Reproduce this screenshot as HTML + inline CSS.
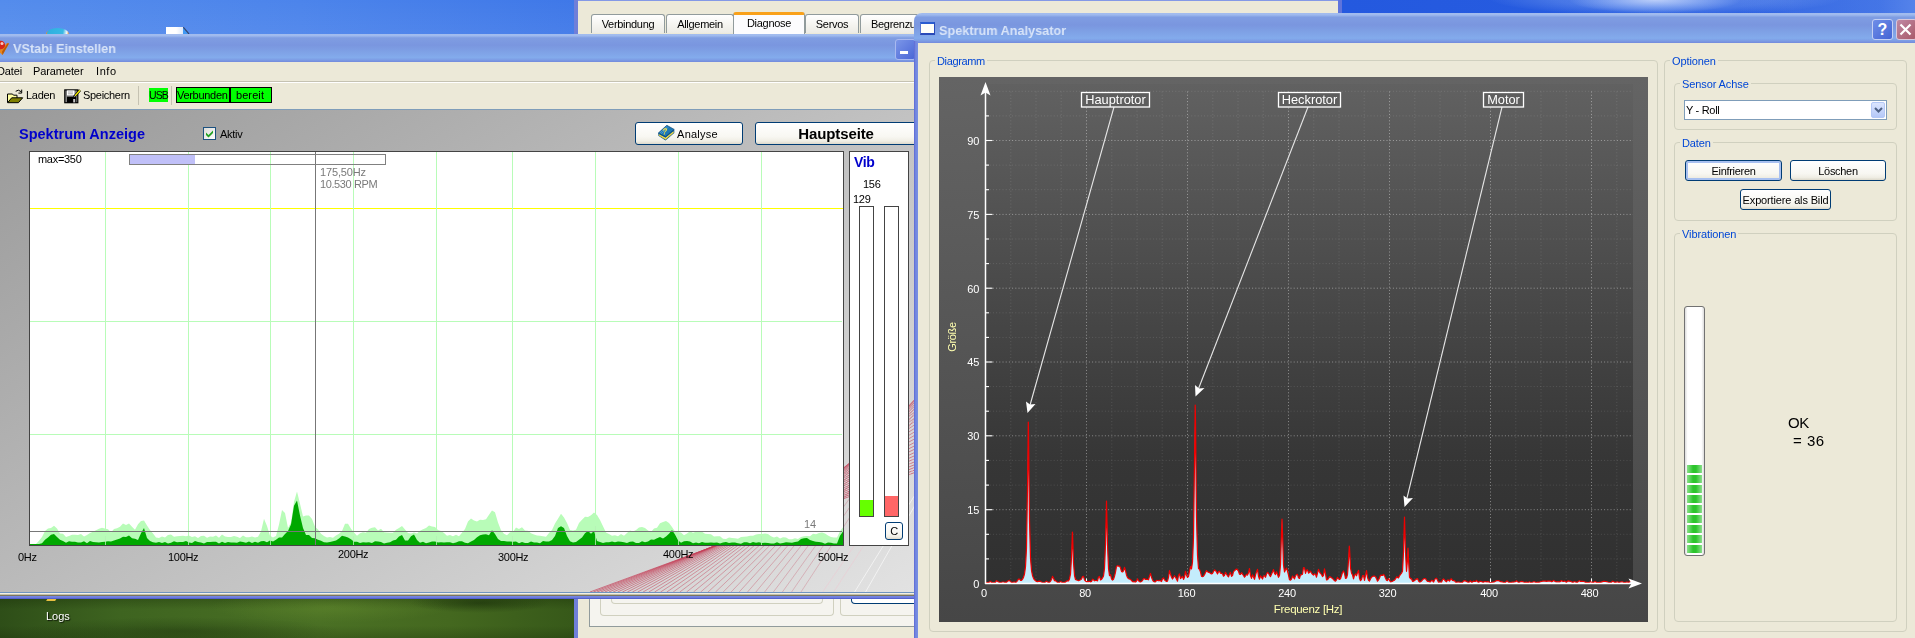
<!DOCTYPE html>
<html lang="de">
<head>
<meta charset="utf-8">
<title>VStabi Spektrum</title>
<style>
*{box-sizing:border-box;margin:0;padding:0}
html,body{width:1915px;height:638px;overflow:hidden;background:#3a6ee0}
.t,.btn,.tab,.gl,.ttl{will-change:transform}
body{position:relative;font-family:"Liberation Sans",sans-serif;font-size:11px;color:#000;letter-spacing:-.3px}
.a{position:absolute}
.t{position:absolute;white-space:nowrap;line-height:1}
/* desktop */
#sky{left:0;top:0;width:1915px;height:600px;background:linear-gradient(90deg,#548cec 0,#4c84eb 300px,#3f78e8 577px,#2a5fe2 1000px,#2459df 1340px,#2a5fe0 1915px)}
#sky2{left:0;top:0;width:577px;height:40px;background:linear-gradient(180deg,rgba(255,255,255,0) 0,rgba(255,255,255,.06) 100%)}
#cloud{left:1490px;top:-20px;width:350px;height:36px;border-radius:50%;background:radial-gradient(ellipse at center,rgba(190,212,255,.4) 0,rgba(170,200,250,.25) 45%,rgba(120,160,240,0) 72%)}
#cloud2{left:1570px;top:-13px;width:170px;height:26px;border-radius:50%;background:radial-gradient(ellipse at center,rgba(225,235,255,.7) 0,rgba(200,220,255,.35) 40%,rgba(150,180,245,0) 72%)}
#cloud3{left:1740px;top:0;width:175px;height:13px;background:linear-gradient(90deg,rgba(120,160,240,0) 0,rgba(120,160,240,.22) 30%,rgba(130,170,245,.3) 80%,rgba(150,185,250,.4) 100%)}
#grass{left:0;top:597px;width:580px;height:41px;background:radial-gradient(ellipse 70px 10px at 480px 6px,rgba(20,40,8,.5),rgba(20,40,8,0)),radial-gradient(ellipse 120px 16px at 330px 10px,rgba(110,150,50,.35),rgba(110,150,50,0)),radial-gradient(ellipse 160px 14px at 180px 34px,rgba(20,40,8,.35),rgba(20,40,8,0)),linear-gradient(180deg,rgba(20,40,5,.35) 0,rgba(20,40,5,0) 30%,rgba(20,40,5,0) 70%,rgba(20,40,5,.25) 100%),linear-gradient(90deg,#2e4e18 0,#3e6420 120px,#4a7024 320px,#44681f 450px,#365819 580px)}
/* back window */
#bw{left:574px;top:-30px;width:768px;height:680px;background:#ece9d8;border-left:4px solid #6f7fd9;border-right:4px solid #5f74dc}
.tab{position:absolute;top:44px;height:19px;border:1px solid #919b9c;border-bottom:none;border-radius:3px 3px 0 0;background:linear-gradient(180deg,#fff 0,#f4f3ee 60%,#ecebe5 100%);text-align:center;line-height:19px;font-size:11px}
.tab.sel{top:42px;height:22px;background:#fcfcfe;border-top:3px solid #f9a11a;line-height:17px}
/* XP windows */
.tb{position:absolute;left:0;top:0;right:0;background:linear-gradient(180deg,#a3bcee 0,#9fbaee 6%,#7f9de2 14%,#7a96df 40%,#7fa2e6 65%,#83abec 84%,#7c9ce4 93%,#7389dc 100%)}
.ttl{position:absolute;white-space:nowrap;font-weight:bold;font-size:13.5px;color:#d8e4f8;line-height:1;letter-spacing:0;transform-origin:0 50%;transform:scaleX(.94)}
.btn{position:absolute;border:1px solid #003c74;border-radius:3px;background:linear-gradient(180deg,#fff 0,#f8f7f2 65%,#f0eee5 86%,#ddd9cb 100%);text-align:center;white-space:nowrap}
.gb{position:absolute;border:1px solid #d0d0bf;border-radius:4px}
.gl{position:absolute;white-space:nowrap;line-height:1;color:#0046d5;background:#ece9d8;padding:0 2px;font-size:11px;letter-spacing:-.1px}
/* vstabi */
#vs{left:-6px;top:33px;width:921px;height:566px;background:#ece9d8;clip-path:inset(1px 0 0 0)}
#vgray{left:6px;top:77px;width:915px;height:482px;background:linear-gradient(147deg,#9a9a9a 0,#e2e2e2 100%)}
/* spektrum */
#sp{left:914px;top:13px;width:1010px;height:640px;background:#ece9d8;border-radius:8px 0 0 0;overflow:hidden}
#sp>*{margin-left:4px}
#sp>.tb{margin-left:0}
#spb{left:0;top:28px;width:4px;height:620px;background:linear-gradient(90deg,#5d68d2 0,#7286e0 40%,#7890e2 100%);margin-left:0!important}
svg text{font-family:"Liberation Sans",sans-serif}
.gM{stroke:rgba(255,255,255,.42);stroke-width:1;stroke-dasharray:1 2.2}
.gm{stroke:rgba(255,255,255,.13);stroke-width:1;stroke-dasharray:1 2.2}
.tk{stroke:#fff;stroke-width:1.1}
</style>
</head>
<body>
<!-- ================= desktop ================= -->
<div class="a" id="sky"></div><div class="a" id="sky2"></div>
<div class="a" id="cloud"></div><div class="a" id="cloud2"></div><div class="a" id="cloud3"></div>
<div class="a" id="grass"></div>
<div class="a" style="left:46px;top:28px;width:23px;height:12px;border-radius:50%;background:linear-gradient(100deg,#e8902a 0,#e8902a 6%,#2fb0e0 10%,#38b8e4 70%,#f4f8fc 86%,#e8a040 94%)"></div>
<div class="a" style="left:166px;top:27px;width:17px;height:7px;background:linear-gradient(90deg,#fff 0,#fff 60%,#dfe9fa 100%)"></div><svg class="a" style="left:183px;top:27px" width="7" height="7" viewBox="0 0 7 7"><path d="M0 0.500L5.500 7H0z" fill="#3f98f4"/><path d="M.3.300L6 7" stroke="#34466e" stroke-width="1.200"/></svg>
<div class="a" style="left:47px;top:598px;width:9px;height:3px;background:#e8c040;transform:skewX(-30deg)"></div>
<div class="t" style="left:46px;top:611px;font-size:11px;color:#fff;text-shadow:1px 1px 1px rgba(0,0,0,.8);letter-spacing:0">Logs</div>

<!-- ================= background window with tabs ================= -->
<div class="a" id="bw">
  <div class="a" style="left:0;top:30px;width:760px;height:1px;background:#8499e6"></div>
  <div class="tab" style="left:13px;width:74px">Verbindung</div>
  <div class="tab" style="left:88px;width:68px">Allgemein</div>
  <div class="tab" style="left:227px;width:54px">Servos</div>
  <div class="tab" style="left:282px;width:70px;text-align:left;padding-left:10px">Begrenzung</div>
  <div class="tab sel" style="left:155px;width:72px">Diagnose</div>
  <!-- bottom part -->
  <div class="a" style="left:11px;top:600px;width:760px;height:57px;background:#f5f4ef;border:1px solid #919b9c;border-top:none"></div>
  <div class="a" style="left:22px;top:600px;width:234px;height:46px;border:1px solid #d0d0bf;border-top:none;border-radius:0 0 4px 4px"></div>
  <div class="a" style="left:33px;top:600px;width:212px;height:34px;border:1px solid #d0d0bf;border-top:none;border-radius:0 0 4px 4px"></div>
  <div class="a" style="left:262px;top:600px;width:120px;height:46px;border:1px solid #d0d0bf;border-top:none;border-radius:0 0 0 4px"></div>
  <div class="a" style="left:273px;top:600px;width:100px;height:34px;border:1px solid #003c74;border-top:none;border-radius:0 0 0 4px;background:#fff"></div>
</div>

<!-- ================= VStabi Einstellen ================= -->
<div class="a" id="vs">
  <div class="tb" style="top:1px;height:28px"></div>
  <svg class="a" style="left:6px;top:5px" width="12" height="20" viewBox="0 0 12 20"><path d="M-2 9l3.500 2.500L7 5l2 .5L2.500 17-2 13z" fill="#e8861a"/><path d="M2.500 17L9 5.500 7.800 5.200 2 13.500z" fill="#b85a08"/><circle cx="0.800" cy="7" r="4.300" fill="#d82418"/><circle cx="2" cy="5.500" r="1.500" fill="#f8c8c0"/></svg>
  <div class="ttl" style="left:19px;top:9px">VStabi Einstellen</div>
  <div class="a" style="left:901px;top:6px;width:21px;height:21px;border:1px solid #a9b9f0;border-radius:3px;background:linear-gradient(135deg,#7b96e8 0,#4a66d6 100%)"><div class="a" style="left:4px;top:11px;width:8px;height:3px;background:#fff"></div></div>
  <!-- menu -->
  <div class="t" style="left:3px;top:33px;font-size:11px;letter-spacing:-.1px">Datei</div>
  <div class="t" style="left:39px;top:33px;font-size:11px;letter-spacing:-.1px">Parameter</div>
  <div class="t" style="left:102px;top:33px;font-size:11px;letter-spacing:.6px">Info</div>
  <div class="a" style="left:0;top:48px;width:921px;height:1px;background:#c5c2b2"></div>
  <div class="a" style="left:0;top:49px;width:921px;height:1px;background:#fff"></div>
  <!-- toolbar -->
  <svg class="a" style="left:12px;top:54px" width="18" height="17" viewBox="0 0 18 17"><path d="M1.500 15.500V7h5l1 1.200h3.500v3" fill="#ffffa0" stroke="#000" stroke-width="1"/><path d="M1.600 15.700h10.800l4.300-4.900H5.700z" fill="#808000" stroke="#000" stroke-width="1"/><path d="M9.700 4.300Q12.300 1.800 15.300 4.800" fill="none" stroke="#000" stroke-width="1"/><path d="M15.700 2.600v3.500h-3.300" fill="none" stroke="#000" stroke-width="1"/></svg>
  <div class="t" style="left:32px;top:57px;font-size:11px">Laden</div>
  <svg class="a" style="left:70px;top:54px" width="18" height="17" viewBox="0 0 18 17"><rect x=".800" y="2.900" width="13" height="12.800" fill="#808080" stroke="#000" stroke-width="1.200"/><rect x="3" y="3.400" width="7.500" height="5" fill="#fff"/><path d="M4 5h5M4 6.800h5" stroke="#999" stroke-width=".8"/><rect x="3" y="9.800" width="9.300" height="5.900" fill="#000"/><rect x="9.200" y="12" width="2" height="3.400" fill="#c8c8c8"/><path d="M16 3.200l-6 6.800" stroke="#000" stroke-width="2.600"/><path d="M16 3.200l-5 5.700" stroke="#f8f000" stroke-width="1.400"/><path d="M9.800 10.200l1.800-.6-1.200-1.200z" fill="#fff" stroke="#000" stroke-width=".4"/></svg>
  <div class="t" style="left:89px;top:57px;font-size:11px">Speichern</div>
  <div class="a" style="left:144px;top:53px;width:1px;height:19px;background:#c5c2b2"></div>
  <div class="a" style="left:177px;top:53px;width:1px;height:19px;background:#c5c2b2"></div>
  <div class="t" style="left:155px;top:55px;width:19px;height:14px;background:#00ff00;font-size:10.5px;letter-spacing:-.9px;line-height:14px;text-align:left;padding-left:0">USB</div>
  <div class="t" style="left:182px;top:54px;width:55px;height:16px;background:#00ff00;border:1px solid #000;font-size:11px;line-height:14px;overflow:hidden">Verbunden</div>
  <div class="t" style="left:235px;top:54px;width:43px;height:16px;background:#00ff00;border:1px solid #000;border-left-width:2px;font-size:11px;line-height:14px;text-align:center;letter-spacing:.1px;padding-right:2px">bereit</div>
  <div class="a" style="left:0;top:76px;width:921px;height:1px;background:#7f9db9"></div>
  <!-- gray work area -->
  <div class="a" id="vgray"></div>
  <svg class="a" style="left:6px;top:0" width="915" height="565" viewBox="0 33 915 565" fill="none" stroke-width="1">
<path d="M590.0 592L918.0 471.3" stroke="rgba(196,64,88,0.68)"/>
<path d="M593.4 592L918.0 468.8" stroke="rgba(196,64,88,0.67)"/>
<path d="M597.0 592L918.0 466.1" stroke="rgba(196,64,88,0.65)"/>
<path d="M600.8 592L918.0 463.3" stroke="rgba(196,64,88,0.64)"/>
<path d="M604.7 592L918.0 460.4" stroke="rgba(196,64,88,0.63)"/>
<path d="M608.9 592L918.0 457.3" stroke="rgba(196,64,88,0.62)"/>
<path d="M613.2 592L918.0 454.2" stroke="rgba(196,64,88,0.60)"/>
<path d="M617.7 592L918.0 450.9" stroke="rgba(196,64,88,0.59)"/>
<path d="M622.4 592L918.0 447.5" stroke="rgba(196,64,88,0.58)"/>
<path d="M627.3 592L918.0 444.1" stroke="rgba(196,64,88,0.57)"/>
<path d="M632.4 592L918.0 440.6" stroke="rgba(196,64,88,0.55)"/>
<path d="M637.7 592L918.0 437.0" stroke="rgba(196,64,88,0.54)"/>
<path d="M643.1 592L918.0 433.4" stroke="rgba(196,64,88,0.53)"/>
<path d="M648.8 592L918.0 429.8" stroke="rgba(196,64,88,0.51)"/>
<path d="M654.6 592L918.0 426.2" stroke="rgba(196,64,88,0.50)"/>
<path d="M660.6 592L918.0 422.6" stroke="rgba(196,64,88,0.49)"/>
<path d="M666.8 592L918.0 419.1" stroke="rgba(196,64,88,0.48)"/>
<path d="M673.2 592L918.0 415.7" stroke="rgba(196,64,88,0.46)"/>
<path d="M679.8 592L918.0 412.4" stroke="rgba(196,64,88,0.45)"/>
<path d="M686.6 592L918.0 409.3" stroke="rgba(196,64,88,0.44)"/>
<path d="M693.5 592L918.0 406.3" stroke="rgba(196,64,88,0.43)"/>
<path d="M700.7 592L918.0 403.6" stroke="rgba(196,64,88,0.41)"/>
<path d="M708.0 592L918.0 401.2" stroke="rgba(196,64,88,0.40)"/>
<path d="M715.5 592L918.0 399.2" stroke="rgba(196,64,88,0.39)"/>
<path d="M723.2 592L918.0 397.5" stroke="rgba(196,64,88,0.37)"/>
<path d="M731.1 592L918.0 396.3" stroke="rgba(196,64,88,0.36)"/>
<path d="M739.2 592L918.0 395.7" stroke="rgba(196,64,88,0.35)"/>
<path d="M747.5 592L918.0 395.7" stroke="rgba(196,64,88,0.34)"/>
<path d="M755.9 592L918.0 396.3" stroke="rgba(196,64,88,0.32)"/>
<path d="M764.6 592L918.0 397.7" stroke="rgba(196,64,88,0.31)"/>
<path d="M773.4 592L918.0 400.0" stroke="rgba(196,64,88,0.30)"/>
<path d="M782.4 592L918.0 403.2" stroke="rgba(196,64,88,0.29)"/>
<path d="M791.6 592L918.0 407.5" stroke="rgba(196,64,88,0.27)"/>
<path d="M801.0 592L918.0 412.9" stroke="rgba(196,64,88,0.26)"/>
  <path d="M854 593L918 490M865 593L918 500" stroke="rgba(255,255,255,.6)"/><path d="M822 593L918 452M833 593L918 462" stroke="rgba(240,200,210,.5)"/>
  </svg>
  <div class="t" style="left:25px;top:94px;font-size:14.500px;font-weight:bold;color:#0000cc;letter-spacing:0">Spektrum Anzeige</div>
  <div class="a" style="left:209px;top:94px;width:13px;height:13px;border:1px solid #1c5180;background:linear-gradient(135deg,#dcdcd7 0,#fff 100%)"><svg class="a" style="left:1px;top:1px" width="9" height="9" viewBox="0 0 9 9"><path d="M1 3.500l2.500 2.500 4.500-4.500v2.500l-4.500 4.500-2.500-2.500z" fill="#21a121"/></svg></div>
  <div class="t" style="left:226px;top:96px;font-size:11px">Aktiv</div>
  <div class="btn" style="left:641px;top:89px;width:108px;height:23px;line-height:22px;font-size:11px;padding-left:17px;letter-spacing:.25px">Analyse
    <svg class="a" style="left:22px;top:2px" width="17" height="16" viewBox="0 0 17 16"><path d="M.3 8.100v2.600l7.200 4.700 8.800-7.400V4.400z" fill="#14588c"/><path d="M.9 9.300v1.200l6.600 4 8.100-6.800V6.300l-8.100 6.500z" fill="#ffef60"/><path d="M.9 10.100l6.600 4 8.100-6.800" fill="none" stroke="#d8b820" stroke-width=".7"/><path d="M8.800.3l7.400 4.100-8.700 7.200L.3 8.100z" fill="#1e78b4" stroke="#0e4a78" stroke-width=".7"/><path d="M1.800 8l7.400-6.600M3.200 8.700l7.300-6.600" stroke="#58a8dc" stroke-width=".7"/><text x="6.200" y="9" font-size="8.500" font-weight="bold" fill="#ffe640" transform="rotate(-12 8 6) skewX(-18)">?</text></svg>
  </div>
  <div class="btn" style="left:761px;top:89px;width:170px;height:23px;line-height:21px;font-size:15px;font-weight:bold;padding-right:8px;letter-spacing:-.1px">Hauptseite</div>

  <!-- chart -->
  <div class="a" style="left:35px;top:118px;width:815px;height:395px;background:#fff;border:1px solid #444;border-bottom:none"></div>
  <svg class="a" style="left:6px;top:0" width="915" height="565" viewBox="0 33 915 565">
    <line x1="30" x2="843" y1="208.500" y2="208.500" stroke="#ffff00"/>
    <g stroke="#b8fcb8" stroke-width="1">
      <line x1="105.500" x2="105.500" y1="152" y2="545"/><line x1="188.500" x2="188.500" y1="152" y2="545"/><line x1="270.500" x2="270.500" y1="152" y2="545"/>
      <line x1="353.500" x2="353.500" y1="152" y2="545"/><line x1="436.500" x2="436.500" y1="152" y2="545"/><line x1="512.500" x2="512.500" y1="152" y2="545"/>
      <line x1="595.500" x2="595.500" y1="152" y2="545"/><line x1="678.500" x2="678.500" y1="152" y2="545"/><line x1="761.500" x2="761.500" y1="152" y2="545"/>
      <line x1="30" x2="842" y1="321.500" y2="321.500"/><line x1="30" x2="842" y1="434.500" y2="434.500"/>
    </g>
    <polygon points="30,545.0 30,544.0 33,544.0 36,544.0 39,540.8 42,537.0 45,531.1 48,528.5 51,528.0 54,525.8 57,528.4 60,533.4 63,533.8 66,537.0 69,536.1 72,534.8 75,534.7 78,534.9 81,534.1 84,536.4 87,535.0 90,532.9 93,531.8 96,530.2 99,528.8 102,527.8 105,528.5 108,529.2 111,532.5 114,529.0 117,528.3 120,526.8 123,523.5 126,525.0 129,523.5 132,526.7 135,529.8 138,524.2 141,521.1 144,520.4 147,525.5 150,530.0 153,533.4 156,537.6 159,537.9 162,536.6 165,537.5 168,535.0 171,534.6 174,536.7 177,536.2 180,535.9 183,535.8 186,536.2 189,535.5 192,536.9 195,536.2 198,538.0 201,536.0 204,535.8 207,537.8 210,536.4 213,536.8 216,535.4 219,537.8 222,534.6 225,536.4 228,536.9 231,536.9 234,535.9 237,536.7 240,537.9 243,535.4 246,537.2 249,537.2 252,536.5 255,537.6 258,536.7 261,531.5 264,518.7 267,526.1 270,535.8 273,537.5 276,536.0 279,524.5 282,510.0 285,513.0 288,528.0 291,522.4 294,501.7 297,491.4 300,503.8 303,516.4 306,515.5 309,515.5 312,518.9 315,526.7 318,529.5 321,533.8 324,536.0 327,537.5 330,536.9 333,537.8 336,535.5 339,533.8 342,531.0 345,523.8 348,523.8 351,528.8 354,532.4 357,535.7 360,533.3 363,532.3 366,532.8 369,528.9 372,527.7 375,527.2 378,530.5 381,528.7 384,532.3 387,532.5 390,532.7 393,532.7 396,529.7 399,528.1 402,525.9 405,529.6 408,533.0 411,533.4 414,532.5 417,533.5 420,530.8 423,529.3 426,528.1 429,525.6 432,526.6 435,527.1 438,530.0 441,531.1 444,532.9 447,535.7 450,534.9 453,536.2 456,534.8 459,536.2 462,532.8 465,529.0 468,521.5 471,518.5 474,520.5 477,521.5 480,519.8 483,520.1 486,519.2 489,514.8 492,510.6 495,512.3 498,522.5 501,530.3 504,533.8 507,535.3 510,532.2 513,531.9 516,527.6 519,528.9 522,527.3 525,530.6 528,530.7 531,533.2 534,534.6 537,535.5 540,535.7 543,536.2 546,536.7 549,533.1 552,530.1 555,523.4 558,518.7 561,513.8 564,517.4 567,522.9 570,529.9 573,530.6 576,529.8 579,522.9 582,519.7 585,516.8 588,516.9 591,515.2 594,512.4 597,515.0 600,520.0 603,526.3 606,532.5 609,534.0 612,535.8 615,535.3 618,536.3 621,534.0 624,535.8 627,533.0 630,530.6 633,531.5 636,529.9 639,527.6 642,527.0 645,528.0 648,530.5 651,532.1 654,528.5 657,527.7 660,523.3 663,522.0 666,521.1 669,522.9 672,527.1 675,531.6 678,532.1 681,532.4 684,535.2 687,533.6 690,531.2 693,532.8 696,531.7 699,531.4 702,531.7 705,533.7 708,534.0 711,534.2 714,536.6 717,536.3 720,536.3 723,538.8 726,539.0 729,537.6 732,538.1 735,538.2 738,538.7 741,536.9 744,536.8 747,536.5 750,535.7 753,535.8 756,534.6 759,534.0 762,534.0 765,533.4 768,533.9 771,536.2 774,537.4 777,536.5 780,538.4 783,537.3 786,537.5 789,539.3 792,539.2 795,538.2 798,539.0 801,537.1 804,536.3 807,536.1 810,536.2 813,533.8 816,534.2 819,532.9 822,532.5 825,533.4 828,535.5 831,536.9 834,537.6 837,537.4 840,531.3 843,527.2 843,545.0" fill="#b8fcb8"/>
    <polygon points="30,545.0 30,544.0 33,544.0 36,544.0 39,544.0 42,543.2 45,539.7 48,537.4 51,534.7 54,534.1 57,537.1 60,539.8 63,541.1 66,542.7 69,541.3 72,541.7 75,541.7 78,542.5 81,542.4 84,541.3 87,543.2 90,541.1 93,541.9 96,542.2 99,542.6 102,542.0 105,541.8 108,541.2 111,541.5 114,540.5 117,539.4 120,538.6 123,536.7 126,537.0 129,535.4 132,538.2 135,538.8 138,540.1 141,533.2 144,527.9 147,538.0 150,541.1 153,542.2 156,542.7 159,542.0 162,543.0 165,542.0 168,543.4 171,542.7 174,541.3 177,542.3 180,541.9 183,542.1 186,541.1 189,542.4 192,542.9 195,541.1 198,542.1 201,542.5 204,543.4 207,541.9 210,541.9 213,541.8 216,541.7 219,543.4 222,541.8 225,542.9 228,542.0 231,542.6 234,542.6 237,542.7 240,541.6 243,542.1 246,542.7 249,541.5 252,543.0 255,541.7 258,542.7 261,541.3 264,541.1 267,542.2 270,540.4 273,541.4 276,539.7 279,537.6 282,537.5 285,533.9 288,531.1 291,524.5 294,505.8 297,500.4 300,515.4 303,527.9 306,535.1 309,535.1 312,538.0 315,538.3 318,539.8 321,540.8 324,542.2 327,542.6 330,541.9 333,541.3 336,540.5 339,538.6 342,535.8 345,536.5 348,537.6 351,539.3 354,541.7 357,541.8 360,542.9 363,542.3 366,542.6 369,542.2 372,543.1 375,541.2 378,541.4 381,541.9 384,543.4 387,542.8 390,542.3 393,540.6 396,539.7 399,536.5 402,535.1 405,540.6 408,540.5 411,536.3 414,534.5 417,540.1 420,542.8 423,541.7 426,543.3 429,542.6 432,541.5 435,541.5 438,542.4 441,542.3 444,542.4 447,542.3 450,542.2 453,543.3 456,542.4 459,541.2 462,541.3 465,542.8 468,543.2 471,541.5 474,540.0 477,537.2 480,535.2 483,534.5 486,534.2 489,535.2 492,530.2 495,534.0 498,539.1 501,541.0 504,541.0 507,541.5 510,541.6 513,541.7 516,541.6 519,543.3 522,542.1 525,542.9 528,542.9 531,541.6 534,542.6 537,542.6 540,543.3 543,541.1 546,541.6 549,541.5 552,540.0 555,536.0 558,528.0 561,526.3 564,528.0 567,536.1 570,541.2 573,542.6 576,542.1 579,539.7 582,537.5 585,533.3 588,531.0 591,533.7 594,531.0 597,540.9 600,542.1 603,543.0 606,542.3 609,542.3 612,541.4 615,542.3 618,541.4 621,541.7 624,542.3 627,542.9 630,541.8 633,541.4 636,543.0 639,543.0 642,541.2 645,542.3 648,541.5 651,539.5 654,539.8 657,538.2 660,537.0 663,538.5 666,536.6 669,533.8 672,529.9 675,534.6 678,540.2 681,542.8 684,541.2 687,541.1 690,541.6 693,543.2 696,542.5 699,543.3 702,541.9 705,542.7 708,542.8 711,542.4 714,542.7 717,542.5 720,543.4 723,542.5 726,541.9 729,543.1 732,542.6 735,542.5 738,543.2 741,543.7 744,542.3 747,542.3 750,543.3 753,542.1 756,542.8 759,542.3 762,543.1 765,542.7 768,543.1 771,543.6 774,543.6 777,542.2 780,543.4 783,543.0 786,542.2 789,542.5 792,542.7 795,541.9 798,541.5 801,539.1 804,538.3 807,538.1 810,540.0 813,541.1 816,541.8 819,541.9 822,542.6 825,543.8 828,542.5 831,542.8 834,543.4 837,543.5 840,535.7 843,531.6 843,545.0" fill="#00a800"/>
    <g stroke="#b6f2b6" stroke-width="1" opacity=".8">
      <line x1="105.500" x2="105.500" y1="536" y2="545"/><line x1="188.500" x2="188.500" y1="536" y2="545"/><line x1="270.500" x2="270.500" y1="536" y2="545"/>
      <line x1="353.500" x2="353.500" y1="536" y2="545"/><line x1="436.500" x2="436.500" y1="536" y2="545"/><line x1="512.500" x2="512.500" y1="536" y2="545"/>
      <line x1="595.500" x2="595.500" y1="526" y2="545"/><line x1="678.500" x2="678.500" y1="536" y2="545"/><line x1="761.500" x2="761.500" y1="536" y2="545"/>
    </g>
    <line x1="30" x2="842" y1="531.500" y2="531.500" stroke="#777"/>
    <line x1="315.500" x2="315.500" y1="152" y2="545" stroke="#777"/>
    <line x1="29" x2="844" y1="545.500" y2="545.500" stroke="#444"/>
    <rect x="129.500" y="154.500" width="256" height="10" fill="none" stroke="#808080"/>
    <rect x="130" y="155" width="65" height="9" fill="#c0c0f8"/>
  </svg>
  <div class="t" style="left:44px;top:121px;font-size:11px">max=350</div>
  <div class="t" style="left:326px;top:134px;color:#7a7a7a;font-size:11px;letter-spacing:-.15px">175,50Hz</div>
  <div class="t" style="left:326px;top:146px;color:#7a7a7a;font-size:11px;letter-spacing:-.4px">10.530 RPM</div>
  <div class="t" style="left:810px;top:486px;color:#7a7a7a;font-size:11px;letter-spacing:0">14</div>
  <div class="t" style="left:24px;top:519px;font-size:11px">0Hz</div>
  <div class="t" style="left:174px;top:519px;font-size:11px">100Hz</div>
  <div class="t" style="left:344px;top:516px;font-size:11px">200Hz</div>
  <div class="t" style="left:504px;top:519px;font-size:11px">300Hz</div>
  <div class="t" style="left:669px;top:516px;font-size:11px">400Hz</div>
  <div class="t" style="left:824px;top:519px;font-size:11px">500Hz</div>

  <!-- Vib panel -->
  <div class="a" style="left:855px;top:118px;width:60px;height:395px;background:#fff;border:1px solid #444"></div>
  <div class="t" style="left:860px;top:122px;font-size:14px;font-weight:bold;color:#0000cc">Vib</div>
  <div class="t" style="left:869px;top:146px;font-size:11px">156</div>
  <div class="t" style="left:859px;top:161px;font-size:11px">129</div>
  <div class="a" style="left:865px;top:173px;width:15px;height:311px;border:1px solid #444;background:#fff"><div class="a" style="left:0;bottom:0;width:13px;height:16px;background:#66ff00"></div></div>
  <div class="a" style="left:890px;top:173px;width:15px;height:311px;border:1px solid #444;background:#fff"><div class="a" style="left:0;bottom:0;width:13px;height:20px;background:#ff6666"></div></div>
  <div class="btn" style="left:891px;top:489px;width:18px;height:18px;line-height:16px;font-size:11px">C</div>
  <!-- bottom border -->
  <div class="a" style="left:0;top:559px;width:921px;height:1px;background:#6f94c0"></div>
  <div class="a" style="left:0;top:560px;width:921px;height:1px;background:#f4f0e0"></div>
  <div class="a" style="left:0;top:561px;width:921px;height:1px;background:#c4c0aa"></div>
  <div class="a" style="left:0;top:562px;width:921px;height:1px;background:#7a7660"></div>
  <div class="a" style="left:0;top:563px;width:921px;height:3px;background:linear-gradient(180deg,#7888e4 0,#6c7cde 50%,#4a54c6 100%)"></div>
</div>

<!-- ================= Spektrum Analysator ================= -->
<div class="a" id="sp">
  <div class="tb" style="height:30px"></div>
  <div class="a" style="left:2px;top:9px;width:15px;height:13px;background:#fffffa;border:1px solid #5a78d0;border-top:2px solid #2a5cd0;border-bottom:2px solid #2a4ab8;border-right:1px solid #2a4ab8"></div>
  <div class="ttl" style="left:21px;top:11px">Spektrum Analysator</div>
  <div class="a" style="left:954px;top:6px;width:21px;height:21px;border:1px solid #c4d0f4;border-radius:3px;background:linear-gradient(135deg,#6f8ee8 0,#4464d4 100%);color:#fff;font-weight:bold;font-size:16px;text-align:center;line-height:19px;letter-spacing:0">?</div>
  <div class="a" style="left:978px;top:6px;width:21px;height:21px;border:1px solid #d8c8dc;border-radius:3px;background:linear-gradient(135deg,#c08aa4 0,#a85868 100%)"><svg class="a" style="left:2px;top:3px" width="13" height="13" viewBox="0 0 13 13"><path d="M1.500 1.500l10 10M11.500 1.500l-10 10" stroke="#fff" stroke-width="2.200"/></svg></div>

  <div class="a" id="spb"></div>
  <div class="gb" style="left:11px;top:47px;width:729px;height:572px"></div>
  <div class="gl" style="left:17px;top:43px;letter-spacing:-.35px">Diagramm</div>
  <div class="gb" style="left:746px;top:47px;width:243px;height:572px"></div>
  <div class="gl" style="left:752px;top:43px">Optionen</div>
  <div class="gb" style="left:756px;top:70px;width:223px;height:47px"></div>
  <div class="gl" style="left:762px;top:66px">Sensor Achse</div>
  <div class="gb" style="left:756px;top:129px;width:223px;height:79px"></div>
  <div class="gl" style="left:762px;top:125px">Daten</div>
  <div class="gb" style="left:756px;top:220px;width:223px;height:389px"></div>
  <div class="gl" style="left:762px;top:216px">Vibrationen</div>

  <div class="a" style="left:766px;top:87px;width:203px;height:20px;background:#fff;border:1px solid #7f9db9"></div>
  <div class="t" style="left:768px;top:92px;font-size:11px">Y - Roll</div>
  <div class="a" style="left:953px;top:89px;width:14px;height:16px;border:1px solid #b4c8f6;border-radius:2px;background:linear-gradient(180deg,#dbe5fe 0,#b4c8f8 100%)"><svg class="a" style="left:2px;top:4px" width="9" height="7" viewBox="0 0 9 7"><path d="M1 1l3.500 3.500L8 1" fill="none" stroke="#4d6185" stroke-width="2"/></svg></div>
  <div class="btn" style="left:767px;top:147px;width:97px;height:21px;line-height:19px;padding-top:1px;box-shadow:inset 0 0 0 2px #a8c0f0">Einfrieren</div>
  <div class="btn" style="left:872px;top:147px;width:96px;height:21px;line-height:19px;padding-top:1px">Löschen</div>
  <div class="btn" style="left:822px;top:176px;width:91px;height:21px;line-height:19px;padding-top:1px;letter-spacing:-.15px">Exportiere als Bild</div>

  <div class="a" style="left:766px;top:293px;width:21px;height:250px;border:1px solid #727272;border-radius:3px;background:linear-gradient(90deg,#dcdcdc 0,#fff 14%,#fff 86%,#dcdcdc 100%);overflow:hidden">
    <div class="a" style="left:2px;right:2px;bottom:2px;height:90px;background:repeating-linear-gradient(0deg,#2cc52c 0,#2cc52c 8px,#fff 8px,#fff 10px)"></div>
    <div class="a" style="left:2px;right:2px;bottom:2px;height:90px;background:linear-gradient(90deg,rgba(255,255,255,.45) 0,rgba(255,255,255,0) 40%,rgba(255,255,255,0) 60%,rgba(255,255,255,.45) 100%)"></div>
  </div>
  <div class="t" style="left:870px;top:402px;font-size:15px">OK</div>
  <div class="t" style="left:875px;top:420px;font-size:15px;letter-spacing:.5px">= 36</div>
</div>

<!-- right chart drawn in page coordinates -->
<svg class="a" style="left:0;top:0;will-change:transform" width="1915" height="638" viewBox="0 0 1915 638">
  <defs>
    <linearGradient id="go" x1="0" y1="0" x2="0" y2="1"><stop offset="0" stop-color="#646464"/><stop offset="1" stop-color="#464646"/></linearGradient>
    <linearGradient id="gi" x1="0" y1="0" x2="0" y2="1"><stop offset="0" stop-color="#616161"/><stop offset=".75" stop-color="#363636"/><stop offset="1" stop-color="#303030"/></linearGradient>
    <linearGradient id="gf" gradientUnits="userSpaceOnUse" x1="0" y1="400" x2="0" y2="584"><stop offset="0" stop-color="#ff0000"/><stop offset=".35" stop-color="#ff6060"/><stop offset=".7" stop-color="#e8f0ff"/><stop offset="1" stop-color="#c0ecff"/></linearGradient>
  </defs>
  <rect x="939" y="77" width="709" height="545" fill="url(#go)"/>
  <rect x="985" y="84" width="648" height="500" fill="url(#gi)"/>
<line x1="986.5" x2="1633" y1="558.9" y2="558.9" class="gm"/>
<line x1="985.5" x2="989.0" y1="558.9" y2="558.9" class="tk"/>
<line x1="986.5" x2="1633" y1="534.3" y2="534.3" class="gm"/>
<line x1="985.5" x2="989.0" y1="534.3" y2="534.3" class="tk"/>
<line x1="986.5" x2="1633" y1="509.7" y2="509.7" class="gM"/>
<line x1="985.5" x2="992.5" y1="509.7" y2="509.7" class="tk"/>
<line x1="986.5" x2="1633" y1="485.1" y2="485.1" class="gm"/>
<line x1="985.5" x2="989.0" y1="485.1" y2="485.1" class="tk"/>
<line x1="986.5" x2="1633" y1="460.4" y2="460.4" class="gm"/>
<line x1="985.5" x2="989.0" y1="460.4" y2="460.4" class="tk"/>
<line x1="986.5" x2="1633" y1="435.8" y2="435.8" class="gM"/>
<line x1="985.5" x2="992.5" y1="435.8" y2="435.8" class="tk"/>
<line x1="986.5" x2="1633" y1="411.2" y2="411.2" class="gm"/>
<line x1="985.5" x2="989.0" y1="411.2" y2="411.2" class="tk"/>
<line x1="986.5" x2="1633" y1="386.6" y2="386.6" class="gm"/>
<line x1="985.5" x2="989.0" y1="386.6" y2="386.6" class="tk"/>
<line x1="986.5" x2="1633" y1="362.0" y2="362.0" class="gM"/>
<line x1="985.5" x2="992.5" y1="362.0" y2="362.0" class="tk"/>
<line x1="986.5" x2="1633" y1="337.4" y2="337.4" class="gm"/>
<line x1="985.5" x2="989.0" y1="337.4" y2="337.4" class="tk"/>
<line x1="986.5" x2="1633" y1="312.8" y2="312.8" class="gm"/>
<line x1="985.5" x2="989.0" y1="312.8" y2="312.8" class="tk"/>
<line x1="986.5" x2="1633" y1="288.2" y2="288.2" class="gM"/>
<line x1="985.5" x2="992.5" y1="288.2" y2="288.2" class="tk"/>
<line x1="986.5" x2="1633" y1="263.6" y2="263.6" class="gm"/>
<line x1="985.5" x2="989.0" y1="263.6" y2="263.6" class="tk"/>
<line x1="986.5" x2="1633" y1="239.0" y2="239.0" class="gm"/>
<line x1="985.5" x2="989.0" y1="239.0" y2="239.0" class="tk"/>
<line x1="986.5" x2="1633" y1="214.4" y2="214.4" class="gM"/>
<line x1="985.5" x2="992.5" y1="214.4" y2="214.4" class="tk"/>
<line x1="986.5" x2="1633" y1="189.7" y2="189.7" class="gm"/>
<line x1="985.5" x2="989.0" y1="189.7" y2="189.7" class="tk"/>
<line x1="986.5" x2="1633" y1="165.1" y2="165.1" class="gm"/>
<line x1="985.5" x2="989.0" y1="165.1" y2="165.1" class="tk"/>
<line x1="986.5" x2="1633" y1="140.5" y2="140.5" class="gM"/>
<line x1="985.5" x2="992.5" y1="140.5" y2="140.5" class="tk"/>
<line x1="986.5" x2="1633" y1="115.9" y2="115.9" class="gm"/>
<line x1="985.5" x2="989.0" y1="115.9" y2="115.9" class="tk"/>
<line x1="986.5" x2="1633" y1="91.3" y2="91.3" class="gm"/>
<line y1="91.5" y2="582.5" x1="1010.8" x2="1010.8" class="gm"/>
<line y1="91.5" y2="582.5" x1="1036.0" x2="1036.0" class="gm"/>
<line y1="91.5" y2="582.5" x1="1061.2" x2="1061.2" class="gm"/>
<line y1="91.5" y2="582.5" x1="1086.5" x2="1086.5" class="gM"/>
<line y1="578.5" y2="583.5" x1="1086.5" x2="1086.5" class="tk"/>
<line y1="91.5" y2="582.5" x1="1111.8" x2="1111.8" class="gm"/>
<line y1="91.5" y2="582.5" x1="1137.0" x2="1137.0" class="gm"/>
<line y1="91.5" y2="582.5" x1="1162.2" x2="1162.2" class="gm"/>
<line y1="91.5" y2="582.5" x1="1187.5" x2="1187.5" class="gM"/>
<line y1="578.5" y2="583.5" x1="1187.5" x2="1187.5" class="tk"/>
<line y1="91.5" y2="582.5" x1="1212.8" x2="1212.8" class="gm"/>
<line y1="91.5" y2="582.5" x1="1238.0" x2="1238.0" class="gm"/>
<line y1="91.5" y2="582.5" x1="1263.2" x2="1263.2" class="gm"/>
<line y1="91.5" y2="582.5" x1="1288.5" x2="1288.5" class="gM"/>
<line y1="578.5" y2="583.5" x1="1288.5" x2="1288.5" class="tk"/>
<line y1="91.5" y2="582.5" x1="1313.8" x2="1313.8" class="gm"/>
<line y1="91.5" y2="582.5" x1="1339.0" x2="1339.0" class="gm"/>
<line y1="91.5" y2="582.5" x1="1364.2" x2="1364.2" class="gm"/>
<line y1="91.5" y2="582.5" x1="1389.5" x2="1389.5" class="gM"/>
<line y1="578.5" y2="583.5" x1="1389.5" x2="1389.5" class="tk"/>
<line y1="91.5" y2="582.5" x1="1414.8" x2="1414.8" class="gm"/>
<line y1="91.5" y2="582.5" x1="1440.0" x2="1440.0" class="gm"/>
<line y1="91.5" y2="582.5" x1="1465.2" x2="1465.2" class="gm"/>
<line y1="91.5" y2="582.5" x1="1490.5" x2="1490.5" class="gM"/>
<line y1="578.5" y2="583.5" x1="1490.5" x2="1490.5" class="tk"/>
<line y1="91.5" y2="582.5" x1="1515.8" x2="1515.8" class="gm"/>
<line y1="91.5" y2="582.5" x1="1541.0" x2="1541.0" class="gm"/>
<line y1="91.5" y2="582.5" x1="1566.2" x2="1566.2" class="gm"/>
<line y1="91.5" y2="582.5" x1="1591.5" x2="1591.5" class="gM"/>
<line y1="578.5" y2="583.5" x1="1591.5" x2="1591.5" class="tk"/>
<line y1="91.5" y2="582.5" x1="1616.8" x2="1616.8" class="gm"/>
  <polygon points="985.5,583.5 985.5,582.4 986.5,582.6 987.5,582.7 988.5,582.7 989.5,581.9 990.5,581.3 991.5,582.4 992.5,582.8 993.5,582.8 994.5,582.8 995.5,582.2 996.5,580.7 997.5,581.2 998.5,582.0 999.5,582.4 1000.5,582.5 1001.5,582.3 1002.5,582.0 1003.5,582.0 1004.5,582.3 1005.5,582.4 1006.5,582.3 1007.5,581.3 1008.5,580.7 1009.5,580.4 1010.5,581.6 1011.5,582.4 1012.5,582.5 1013.5,582.2 1014.5,582.0 1015.5,582.5 1016.5,581.9 1017.5,580.6 1018.5,579.2 1019.5,579.0 1020.5,580.4 1021.5,580.4 1022.5,579.3 1023.5,577.4 1024.5,574.0 1025.5,566.8 1026.5,548.3 1027.5,489.0 1028.3,422.0 1028.5,428.9 1029.5,521.3 1030.5,558.1 1031.5,570.4 1032.5,575.6 1033.5,578.3 1034.5,579.8 1035.5,580.7 1036.5,581.4 1037.5,581.8 1038.5,581.4 1039.5,581.1 1040.5,581.4 1041.5,582.0 1042.5,582.5 1043.5,582.8 1044.5,582.9 1045.5,581.9 1046.5,581.1 1047.5,582.0 1048.5,582.4 1049.5,582.3 1050.5,581.3 1051.5,579.5 1052.5,576.4 1053.5,578.2 1054.5,580.7 1055.5,580.7 1056.5,581.4 1057.5,582.6 1058.5,582.8 1059.5,582.4 1060.5,581.4 1061.5,582.0 1062.5,582.8 1063.5,582.6 1064.5,582.4 1065.5,582.2 1066.5,581.1 1067.5,580.9 1068.5,580.9 1069.5,579.0 1070.5,574.1 1071.5,557.8 1072.4,532.0 1072.5,532.6 1073.5,562.8 1074.5,575.5 1075.5,579.5 1076.5,580.0 1077.5,580.3 1078.5,580.7 1079.5,580.3 1080.5,579.7 1081.5,579.0 1082.5,576.5 1083.5,576.4 1084.5,579.9 1085.5,581.1 1086.5,581.7 1087.5,581.7 1088.5,581.6 1089.5,581.3 1090.5,581.9 1091.5,581.4 1092.5,579.2 1093.5,579.8 1094.5,580.8 1095.5,580.5 1096.5,580.5 1097.5,580.9 1098.5,577.2 1099.5,576.4 1100.5,580.0 1101.5,579.3 1102.5,577.9 1103.5,576.0 1104.5,568.3 1105.5,544.4 1106.5,501.0 1106.5,501.0 1107.5,544.4 1108.5,568.3 1109.5,575.7 1110.5,574.7 1111.5,578.9 1112.5,580.1 1113.5,579.3 1114.5,576.3 1115.5,572.2 1116.5,566.5 1117.5,565.7 1118.5,566.2 1119.5,566.1 1120.5,568.1 1121.5,571.4 1122.5,572.0 1123.5,570.9 1124.5,567.4 1125.5,570.7 1126.5,575.2 1127.5,577.5 1128.5,578.6 1129.5,578.9 1130.5,579.5 1131.5,580.4 1132.5,581.7 1133.5,581.8 1134.5,581.7 1135.5,582.1 1136.5,581.0 1137.5,578.9 1138.5,580.7 1139.5,581.8 1140.5,582.1 1141.5,581.5 1142.5,580.4 1143.5,578.7 1144.5,578.5 1145.5,579.5 1146.5,579.4 1147.5,579.5 1148.5,579.8 1149.5,576.2 1150.5,573.4 1151.5,577.3 1152.5,579.8 1153.5,581.3 1154.5,582.0 1155.5,581.9 1156.5,580.4 1157.5,580.5 1158.5,580.8 1159.5,580.4 1160.5,580.7 1161.5,581.5 1162.5,578.8 1163.5,577.9 1164.5,579.8 1165.5,580.8 1166.5,581.4 1167.5,581.2 1168.5,577.3 1169.5,570.7 1170.5,574.3 1171.5,577.2 1172.5,579.0 1173.5,577.4 1174.5,575.7 1175.5,577.3 1176.5,579.1 1177.5,581.2 1178.5,575.5 1179.5,573.9 1180.5,578.6 1181.5,577.6 1182.5,576.3 1183.5,579.4 1184.5,577.2 1185.5,571.4 1186.5,575.3 1187.5,577.4 1188.5,576.5 1189.5,571.2 1190.5,566.6 1191.5,568.9 1192.5,562.0 1193.5,537.6 1194.5,463.7 1195.2,405.0 1195.5,419.7 1196.5,517.1 1197.5,555.1 1198.5,568.5 1199.5,569.4 1200.5,572.0 1201.5,576.3 1202.5,576.7 1203.5,576.2 1204.5,574.7 1205.5,572.4 1206.5,570.6 1207.5,571.8 1208.5,572.3 1209.5,572.4 1210.5,573.5 1211.5,573.9 1212.5,573.4 1213.5,571.5 1214.5,569.9 1215.5,570.6 1216.5,572.0 1217.5,573.9 1218.5,571.7 1219.5,571.2 1220.5,573.1 1221.5,573.4 1222.5,573.7 1223.5,576.2 1224.5,575.4 1225.5,572.3 1226.5,574.2 1227.5,575.8 1228.5,576.8 1229.5,574.3 1230.5,572.4 1231.5,576.4 1232.5,575.6 1233.5,571.6 1234.5,570.7 1235.5,569.8 1236.5,569.1 1237.5,569.8 1238.5,571.2 1239.5,574.2 1240.5,574.4 1241.5,572.7 1242.5,574.1 1243.5,575.5 1244.5,577.2 1245.5,575.8 1246.5,574.3 1247.5,575.1 1248.5,572.8 1249.5,568.5 1250.5,575.6 1251.5,578.4 1252.5,574.8 1253.5,577.1 1254.5,579.3 1255.5,575.1 1256.5,571.9 1257.5,569.4 1258.5,576.3 1259.5,579.2 1260.5,575.8 1261.5,577.4 1262.5,579.0 1263.5,576.0 1264.5,575.7 1265.5,577.3 1266.5,574.0 1267.5,572.4 1268.5,573.3 1269.5,575.3 1270.5,576.5 1271.5,574.2 1272.5,571.9 1273.5,569.6 1274.5,573.3 1275.5,574.5 1276.5,571.8 1277.5,574.4 1278.5,577.3 1279.5,575.4 1280.5,565.0 1281.5,533.0 1282.0,519.0 1282.5,533.0 1283.5,565.0 1284.5,571.9 1285.5,569.8 1286.5,568.1 1287.5,571.1 1288.5,575.1 1289.5,579.8 1290.5,580.1 1291.5,579.0 1292.5,576.0 1293.5,577.4 1294.5,578.9 1295.5,575.8 1296.5,574.5 1297.5,574.4 1298.5,577.8 1299.5,578.4 1300.5,574.8 1301.5,574.8 1302.5,574.2 1303.5,567.5 1304.5,568.1 1305.5,573.4 1306.5,570.4 1307.5,569.9 1308.5,573.2 1309.5,572.3 1310.5,571.1 1311.5,573.0 1312.5,574.3 1313.5,575.1 1314.5,573.8 1315.5,574.2 1316.5,577.2 1317.5,573.2 1318.5,569.3 1319.5,572.0 1320.5,573.6 1321.5,574.4 1322.5,576.6 1323.5,575.4 1324.5,568.9 1325.5,573.8 1326.5,579.9 1327.5,579.7 1328.5,578.5 1329.5,576.6 1330.5,577.1 1331.5,577.7 1332.5,578.4 1333.5,579.5 1334.5,580.7 1335.5,581.1 1336.5,579.8 1337.5,577.3 1338.5,578.8 1339.5,579.4 1340.5,578.8 1341.5,575.8 1342.5,572.5 1343.5,571.0 1344.5,573.4 1345.5,578.4 1346.5,578.0 1347.5,574.7 1348.5,560.6 1349.3,546.0 1349.5,547.4 1350.5,568.1 1351.5,573.0 1352.5,574.9 1353.5,578.8 1354.5,575.3 1355.5,574.0 1356.5,575.8 1357.5,572.5 1358.5,570.4 1359.5,578.2 1360.5,580.7 1361.5,579.7 1362.5,575.8 1363.5,575.5 1364.5,580.5 1365.5,575.4 1366.5,570.6 1367.5,577.3 1368.5,580.3 1369.5,581.1 1370.5,578.9 1371.5,577.2 1372.5,576.5 1373.5,576.1 1374.5,576.0 1375.5,576.7 1376.5,578.6 1377.5,581.2 1378.5,579.9 1379.5,578.0 1380.5,575.3 1381.5,575.2 1382.5,575.5 1383.5,574.4 1384.5,575.6 1385.5,578.2 1386.5,580.2 1387.5,580.6 1388.5,578.5 1389.5,580.1 1390.5,582.0 1391.5,581.7 1392.5,581.2 1393.5,580.6 1394.5,580.1 1395.5,578.9 1396.5,576.9 1397.5,577.4 1398.5,577.9 1399.5,575.8 1400.5,574.3 1401.5,573.3 1402.5,571.3 1403.5,552.0 1404.5,517.0 1404.5,517.0 1405.5,552.0 1406.5,571.3 1407.5,560.0 1408.0,548.0 1408.5,560.0 1409.5,577.2 1410.5,578.6 1411.5,578.8 1412.5,581.3 1413.5,581.2 1414.5,580.5 1415.5,579.8 1416.5,579.1 1417.5,578.6 1418.5,580.8 1419.5,582.1 1420.5,581.9 1421.5,581.0 1422.5,579.9 1423.5,578.9 1424.5,578.5 1425.5,578.6 1426.5,580.3 1427.5,581.3 1428.5,581.4 1429.5,581.9 1430.5,582.0 1431.5,580.3 1432.5,580.6 1433.5,582.2 1434.5,580.0 1435.5,578.5 1436.5,578.2 1437.5,580.3 1438.5,582.3 1439.5,582.1 1440.5,582.0 1441.5,582.2 1442.5,579.8 1443.5,578.8 1444.5,579.8 1445.5,581.1 1446.5,581.8 1447.5,580.1 1448.5,580.0 1449.5,581.1 1450.5,579.4 1451.5,578.9 1452.5,580.5 1453.5,580.6 1454.5,580.7 1455.5,582.1 1456.5,582.5 1457.5,582.1 1458.5,582.0 1459.5,582.2 1460.5,582.7 1461.5,582.8 1462.5,582.4 1463.5,581.0 1464.5,580.6 1465.5,580.9 1466.5,581.4 1467.5,582.0 1468.5,582.7 1469.5,581.8 1470.5,580.9 1471.5,582.3 1472.5,582.2 1473.5,581.1 1474.5,581.5 1475.5,581.4 1476.5,580.5 1477.5,581.5 1478.5,582.5 1479.5,581.7 1480.5,581.4 1481.5,581.5 1482.5,582.2 1483.5,582.3 1484.5,581.5 1485.5,581.7 1486.5,582.0 1487.5,581.6 1488.5,581.8 1489.5,582.5 1490.5,582.7 1491.5,582.6 1492.5,582.2 1493.5,582.1 1494.5,581.9 1495.5,581.1 1496.5,580.7 1497.5,580.5 1498.5,580.6 1499.5,581.0 1500.5,581.7 1501.5,581.8 1502.5,581.9 1503.5,582.6 1504.5,582.7 1505.5,582.4 1506.5,581.2 1507.5,581.0 1508.5,582.3 1509.5,582.6 1510.5,582.6 1511.5,582.4 1512.5,582.2 1513.5,582.2 1514.5,582.0 1515.5,581.6 1516.5,580.7 1517.5,581.6 1518.5,582.6 1519.5,582.2 1520.5,581.8 1521.5,581.4 1522.5,581.6 1523.5,582.0 1524.5,582.6 1525.5,582.3 1526.5,582.1 1527.5,582.5 1528.5,582.4 1529.5,581.8 1530.5,582.5 1531.5,582.7 1532.5,582.2 1533.5,581.8 1534.5,581.6 1535.5,582.4 1536.5,582.5 1537.5,582.2 1538.5,582.3 1539.5,582.2 1540.5,581.8 1541.5,581.5 1542.5,581.2 1543.5,581.1 1544.5,581.1 1545.5,581.2 1546.5,581.3 1547.5,581.2 1548.5,581.1 1549.5,581.0 1550.5,581.1 1551.5,581.8 1552.5,581.4 1553.5,580.4 1554.5,581.1 1555.5,581.7 1556.5,581.9 1557.5,581.8 1558.5,581.8 1559.5,581.9 1560.5,581.4 1561.5,580.5 1562.5,581.2 1563.5,581.5 1564.5,581.0 1565.5,581.8 1566.5,582.4 1567.5,581.1 1568.5,580.9 1569.5,581.2 1570.5,581.3 1571.5,581.7 1572.5,582.6 1573.5,582.1 1574.5,581.5 1575.5,582.1 1576.5,582.3 1577.5,582.3 1578.5,581.2 1579.5,580.7 1580.5,581.4 1581.5,581.4 1582.5,581.4 1583.5,581.5 1584.5,581.8 1585.5,582.4 1586.5,582.4 1587.5,582.5 1588.5,582.7 1589.5,582.2 1590.5,581.7 1591.5,582.2 1592.5,582.4 1593.5,582.6 1594.5,581.6 1595.5,581.5 1596.5,582.6 1597.5,582.7 1598.5,582.6 1599.5,582.4 1600.5,582.3 1601.5,582.1 1602.5,581.6 1603.5,581.4 1604.5,581.4 1605.5,581.5 1606.5,581.6 1607.5,582.0 1608.5,582.3 1609.5,582.7 1610.5,582.8 1611.5,582.3 1612.5,581.2 1613.5,581.6 1614.5,582.3 1615.5,582.3 1616.5,582.1 1617.5,581.8 1618.5,582.4 1619.5,582.6 1620.5,582.0 1621.5,581.8 1622.5,581.8 1623.5,582.3 1624.5,582.5 1625.5,582.4 1626.5,582.1 1627.5,582.1 1628.5,582.5 1629.5,581.9 1630.5,581.3 1631.5,581.1 1632.5,581.5 1633.5,582.2 1633.5,583.5" fill="#c4ecfc"/>
  <polyline points="985.5,582.4 986.5,582.6 987.5,582.7 988.5,582.7 989.5,581.9 990.5,581.3 991.5,582.4 992.5,582.8 993.5,582.8 994.5,582.8 995.5,582.2 996.5,580.7 997.5,581.2 998.5,582.0 999.5,582.4 1000.5,582.5 1001.5,582.3 1002.5,582.0 1003.5,582.0 1004.5,582.3 1005.5,582.4 1006.5,582.3 1007.5,581.3 1008.5,580.7 1009.5,580.4 1010.5,581.6 1011.5,582.4 1012.5,582.5 1013.5,582.2 1014.5,582.0 1015.5,582.5 1016.5,581.9 1017.5,580.6 1018.5,579.2 1019.5,579.0 1020.5,580.4 1021.5,580.4 1022.5,579.3 1023.5,577.4 1024.5,574.0 1025.5,566.8 1026.5,548.3 1027.5,489.0 1028.3,422.0 1028.5,428.9 1029.5,521.3 1030.5,558.1 1031.5,570.4 1032.5,575.6 1033.5,578.3 1034.5,579.8 1035.5,580.7 1036.5,581.4 1037.5,581.8 1038.5,581.4 1039.5,581.1 1040.5,581.4 1041.5,582.0 1042.5,582.5 1043.5,582.8 1044.5,582.9 1045.5,581.9 1046.5,581.1 1047.5,582.0 1048.5,582.4 1049.5,582.3 1050.5,581.3 1051.5,579.5 1052.5,576.4 1053.5,578.2 1054.5,580.7 1055.5,580.7 1056.5,581.4 1057.5,582.6 1058.5,582.8 1059.5,582.4 1060.5,581.4 1061.5,582.0 1062.5,582.8 1063.5,582.6 1064.5,582.4 1065.5,582.2 1066.5,581.1 1067.5,580.9 1068.5,580.9 1069.5,579.0 1070.5,574.1 1071.5,557.8 1072.4,532.0 1072.5,532.6 1073.5,562.8 1074.5,575.5 1075.5,579.5 1076.5,580.0 1077.5,580.3 1078.5,580.7 1079.5,580.3 1080.5,579.7 1081.5,579.0 1082.5,576.5 1083.5,576.4 1084.5,579.9 1085.5,581.1 1086.5,581.7 1087.5,581.7 1088.5,581.6 1089.5,581.3 1090.5,581.9 1091.5,581.4 1092.5,579.2 1093.5,579.8 1094.5,580.8 1095.5,580.5 1096.5,580.5 1097.5,580.9 1098.5,577.2 1099.5,576.4 1100.5,580.0 1101.5,579.3 1102.5,577.9 1103.5,576.0 1104.5,568.3 1105.5,544.4 1106.5,501.0 1106.5,501.0 1107.5,544.4 1108.5,568.3 1109.5,575.7 1110.5,574.7 1111.5,578.9 1112.5,580.1 1113.5,579.3 1114.5,576.3 1115.5,572.2 1116.5,566.5 1117.5,565.7 1118.5,566.2 1119.5,566.1 1120.5,568.1 1121.5,571.4 1122.5,572.0 1123.5,570.9 1124.5,567.4 1125.5,570.7 1126.5,575.2 1127.5,577.5 1128.5,578.6 1129.5,578.9 1130.5,579.5 1131.5,580.4 1132.5,581.7 1133.5,581.8 1134.5,581.7 1135.5,582.1 1136.5,581.0 1137.5,578.9 1138.5,580.7 1139.5,581.8 1140.5,582.1 1141.5,581.5 1142.5,580.4 1143.5,578.7 1144.5,578.5 1145.5,579.5 1146.5,579.4 1147.5,579.5 1148.5,579.8 1149.5,576.2 1150.5,573.4 1151.5,577.3 1152.5,579.8 1153.5,581.3 1154.5,582.0 1155.5,581.9 1156.5,580.4 1157.5,580.5 1158.5,580.8 1159.5,580.4 1160.5,580.7 1161.5,581.5 1162.5,578.8 1163.5,577.9 1164.5,579.8 1165.5,580.8 1166.5,581.4 1167.5,581.2 1168.5,577.3 1169.5,570.7 1170.5,574.3 1171.5,577.2 1172.5,579.0 1173.5,577.4 1174.5,575.7 1175.5,577.3 1176.5,579.1 1177.5,581.2 1178.5,575.5 1179.5,573.9 1180.5,578.6 1181.5,577.6 1182.5,576.3 1183.5,579.4 1184.5,577.2 1185.5,571.4 1186.5,575.3 1187.5,577.4 1188.5,576.5 1189.5,571.2 1190.5,566.6 1191.5,568.9 1192.5,562.0 1193.5,537.6 1194.5,463.7 1195.2,405.0 1195.5,419.7 1196.5,517.1 1197.5,555.1 1198.5,568.5 1199.5,569.4 1200.5,572.0 1201.5,576.3 1202.5,576.7 1203.5,576.2 1204.5,574.7 1205.5,572.4 1206.5,570.6 1207.5,571.8 1208.5,572.3 1209.5,572.4 1210.5,573.5 1211.5,573.9 1212.5,573.4 1213.5,571.5 1214.5,569.9 1215.5,570.6 1216.5,572.0 1217.5,573.9 1218.5,571.7 1219.5,571.2 1220.5,573.1 1221.5,573.4 1222.5,573.7 1223.5,576.2 1224.5,575.4 1225.5,572.3 1226.5,574.2 1227.5,575.8 1228.5,576.8 1229.5,574.3 1230.5,572.4 1231.5,576.4 1232.5,575.6 1233.5,571.6 1234.5,570.7 1235.5,569.8 1236.5,569.1 1237.5,569.8 1238.5,571.2 1239.5,574.2 1240.5,574.4 1241.5,572.7 1242.5,574.1 1243.5,575.5 1244.5,577.2 1245.5,575.8 1246.5,574.3 1247.5,575.1 1248.5,572.8 1249.5,568.5 1250.5,575.6 1251.5,578.4 1252.5,574.8 1253.5,577.1 1254.5,579.3 1255.5,575.1 1256.5,571.9 1257.5,569.4 1258.5,576.3 1259.5,579.2 1260.5,575.8 1261.5,577.4 1262.5,579.0 1263.5,576.0 1264.5,575.7 1265.5,577.3 1266.5,574.0 1267.5,572.4 1268.5,573.3 1269.5,575.3 1270.5,576.5 1271.5,574.2 1272.5,571.9 1273.5,569.6 1274.5,573.3 1275.5,574.5 1276.5,571.8 1277.5,574.4 1278.5,577.3 1279.5,575.4 1280.5,565.0 1281.5,533.0 1282.0,519.0 1282.5,533.0 1283.5,565.0 1284.5,571.9 1285.5,569.8 1286.5,568.1 1287.5,571.1 1288.5,575.1 1289.5,579.8 1290.5,580.1 1291.5,579.0 1292.5,576.0 1293.5,577.4 1294.5,578.9 1295.5,575.8 1296.5,574.5 1297.5,574.4 1298.5,577.8 1299.5,578.4 1300.5,574.8 1301.5,574.8 1302.5,574.2 1303.5,567.5 1304.5,568.1 1305.5,573.4 1306.5,570.4 1307.5,569.9 1308.5,573.2 1309.5,572.3 1310.5,571.1 1311.5,573.0 1312.5,574.3 1313.5,575.1 1314.5,573.8 1315.5,574.2 1316.5,577.2 1317.5,573.2 1318.5,569.3 1319.5,572.0 1320.5,573.6 1321.5,574.4 1322.5,576.6 1323.5,575.4 1324.5,568.9 1325.5,573.8 1326.5,579.9 1327.5,579.7 1328.5,578.5 1329.5,576.6 1330.5,577.1 1331.5,577.7 1332.5,578.4 1333.5,579.5 1334.5,580.7 1335.5,581.1 1336.5,579.8 1337.5,577.3 1338.5,578.8 1339.5,579.4 1340.5,578.8 1341.5,575.8 1342.5,572.5 1343.5,571.0 1344.5,573.4 1345.5,578.4 1346.5,578.0 1347.5,574.7 1348.5,560.6 1349.3,546.0 1349.5,547.4 1350.5,568.1 1351.5,573.0 1352.5,574.9 1353.5,578.8 1354.5,575.3 1355.5,574.0 1356.5,575.8 1357.5,572.5 1358.5,570.4 1359.5,578.2 1360.5,580.7 1361.5,579.7 1362.5,575.8 1363.5,575.5 1364.5,580.5 1365.5,575.4 1366.5,570.6 1367.5,577.3 1368.5,580.3 1369.5,581.1 1370.5,578.9 1371.5,577.2 1372.5,576.5 1373.5,576.1 1374.5,576.0 1375.5,576.7 1376.5,578.6 1377.5,581.2 1378.5,579.9 1379.5,578.0 1380.5,575.3 1381.5,575.2 1382.5,575.5 1383.5,574.4 1384.5,575.6 1385.5,578.2 1386.5,580.2 1387.5,580.6 1388.5,578.5 1389.5,580.1 1390.5,582.0 1391.5,581.7 1392.5,581.2 1393.5,580.6 1394.5,580.1 1395.5,578.9 1396.5,576.9 1397.5,577.4 1398.5,577.9 1399.5,575.8 1400.5,574.3 1401.5,573.3 1402.5,571.3 1403.5,552.0 1404.5,517.0 1404.5,517.0 1405.5,552.0 1406.5,571.3 1407.5,560.0 1408.0,548.0 1408.5,560.0 1409.5,577.2 1410.5,578.6 1411.5,578.8 1412.5,581.3 1413.5,581.2 1414.5,580.5 1415.5,579.8 1416.5,579.1 1417.5,578.6 1418.5,580.8 1419.5,582.1 1420.5,581.9 1421.5,581.0 1422.5,579.9 1423.5,578.9 1424.5,578.5 1425.5,578.6 1426.5,580.3 1427.5,581.3 1428.5,581.4 1429.5,581.9 1430.5,582.0 1431.5,580.3 1432.5,580.6 1433.5,582.2 1434.5,580.0 1435.5,578.5 1436.5,578.2 1437.5,580.3 1438.5,582.3 1439.5,582.1 1440.5,582.0 1441.5,582.2 1442.5,579.8 1443.5,578.8 1444.5,579.8 1445.5,581.1 1446.5,581.8 1447.5,580.1 1448.5,580.0 1449.5,581.1 1450.5,579.4 1451.5,578.9 1452.5,580.5 1453.5,580.6 1454.5,580.7 1455.5,582.1 1456.5,582.5 1457.5,582.1 1458.5,582.0 1459.5,582.2 1460.5,582.7 1461.5,582.8 1462.5,582.4 1463.5,581.0 1464.5,580.6 1465.5,580.9 1466.5,581.4 1467.5,582.0 1468.5,582.7 1469.5,581.8 1470.5,580.9 1471.5,582.3 1472.5,582.2 1473.5,581.1 1474.5,581.5 1475.5,581.4 1476.5,580.5 1477.5,581.5 1478.5,582.5 1479.5,581.7 1480.5,581.4 1481.5,581.5 1482.5,582.2 1483.5,582.3 1484.5,581.5 1485.5,581.7 1486.5,582.0 1487.5,581.6 1488.5,581.8 1489.5,582.5 1490.5,582.7 1491.5,582.6 1492.5,582.2 1493.5,582.1 1494.5,581.9 1495.5,581.1 1496.5,580.7 1497.5,580.5 1498.5,580.6 1499.5,581.0 1500.5,581.7 1501.5,581.8 1502.5,581.9 1503.5,582.6 1504.5,582.7 1505.5,582.4 1506.5,581.2 1507.5,581.0 1508.5,582.3 1509.5,582.6 1510.5,582.6 1511.5,582.4 1512.5,582.2 1513.5,582.2 1514.5,582.0 1515.5,581.6 1516.5,580.7 1517.5,581.6 1518.5,582.6 1519.5,582.2 1520.5,581.8 1521.5,581.4 1522.5,581.6 1523.5,582.0 1524.5,582.6 1525.5,582.3 1526.5,582.1 1527.5,582.5 1528.5,582.4 1529.5,581.8 1530.5,582.5 1531.5,582.7 1532.5,582.2 1533.5,581.8 1534.5,581.6 1535.5,582.4 1536.5,582.5 1537.5,582.2 1538.5,582.3 1539.5,582.2 1540.5,581.8 1541.5,581.5 1542.5,581.2 1543.5,581.1 1544.5,581.1 1545.5,581.2 1546.5,581.3 1547.5,581.2 1548.5,581.1 1549.5,581.0 1550.5,581.1 1551.5,581.8 1552.5,581.4 1553.5,580.4 1554.5,581.1 1555.5,581.7 1556.5,581.9 1557.5,581.8 1558.5,581.8 1559.5,581.9 1560.5,581.4 1561.5,580.5 1562.5,581.2 1563.5,581.5 1564.5,581.0 1565.5,581.8 1566.5,582.4 1567.5,581.1 1568.5,580.9 1569.5,581.2 1570.5,581.3 1571.5,581.7 1572.5,582.6 1573.5,582.1 1574.5,581.5 1575.5,582.1 1576.5,582.3 1577.5,582.3 1578.5,581.2 1579.5,580.7 1580.5,581.4 1581.5,581.4 1582.5,581.4 1583.5,581.5 1584.5,581.8 1585.5,582.4 1586.5,582.4 1587.5,582.5 1588.5,582.7 1589.5,582.2 1590.5,581.7 1591.5,582.2 1592.5,582.4 1593.5,582.6 1594.5,581.6 1595.5,581.5 1596.5,582.6 1597.5,582.7 1598.5,582.6 1599.5,582.4 1600.5,582.3 1601.5,582.1 1602.5,581.6 1603.5,581.4 1604.5,581.4 1605.5,581.5 1606.5,581.6 1607.5,582.0 1608.5,582.3 1609.5,582.7 1610.5,582.8 1611.5,582.3 1612.5,581.2 1613.5,581.6 1614.5,582.3 1615.5,582.3 1616.5,582.1 1617.5,581.8 1618.5,582.4 1619.5,582.6 1620.5,582.0 1621.5,581.8 1622.5,581.8 1623.5,582.3 1624.5,582.5 1625.5,582.4 1626.5,582.1 1627.5,582.1 1628.5,582.5 1629.5,581.9 1630.5,581.3 1631.5,581.1 1632.5,581.5 1633.5,582.2" fill="none" stroke="#f00000" stroke-width="1.200" stroke-linejoin="round"/>
  <g stroke="#fff" stroke-width="1.500">
    <line x1="985.500" x2="985.500" y1="92" y2="584"/>
    <line x1="985" x2="1632" y1="583.500" y2="583.500"/>
  </g>
  <path d="M985.500 82l-5 13.500 5-3 5 3z" fill="#fff"/>
  <path d="M1642 583.500l-13.500-5 3 5-3 5z" fill="#fff"/>
  <g stroke="#e6e6e6" stroke-width="1.100">
    <line x1="1114" y1="107" x2="1029.500" y2="407"/>
    <line x1="1308" y1="107" x2="1198" y2="390"/>
    <line x1="1502" y1="107" x2="1406.500" y2="500"/>
  </g>
  <path d="M1027.500 413l-1.500-11.500 4 3 5.500-.5z" fill="#fff"/>
  <path d="M1195.500 396.500l-.5-11.500 4 3.500 5.500-.5z" fill="#fff"/>
  <path d="M1404.500 507l-1-11.500 4 3 5.500-.5z" fill="#fff"/>
  <g fill="#5e5e5e" stroke="#fff" stroke-width="1.300">
    <rect x="1081.500" y="92.500" width="68" height="14.500"/>
    <rect x="1278.500" y="92.500" width="62" height="14.500"/>
    <rect x="1483.500" y="92.500" width="40" height="14.500"/>
  </g>
  <g fill="#fff" font-size="12.800" text-anchor="middle" letter-spacing="0">
    <text x="1115.500" y="104">Hauptrotor</text>
    <text x="1309.500" y="104">Heckrotor</text>
    <text x="1503.500" y="104">Motor</text>
  </g>
  <g fill="#fff" font-size="11" text-anchor="end">
    <text x="979" y="145">90</text><text x="979" y="219">75</text><text x="979" y="293">60</text>
    <text x="979" y="366">45</text><text x="979" y="440">30</text><text x="979" y="514">15</text><text x="979" y="588">0</text>
  </g>
  <g fill="#fff" font-size="11" text-anchor="middle">
    <text x="984" y="597">0</text><text x="1085" y="597">80</text><text x="1186.500" y="597">160</text><text x="1287" y="597">240</text>
    <text x="1387.500" y="597">320</text><text x="1489" y="597">400</text><text x="1589.500" y="597">480</text>
  </g>
  <text x="1308" y="613" fill="#ffffb0" font-size="11.500" text-anchor="middle">Frequenz [Hz]</text>
  <text transform="translate(956 337) rotate(-90)" fill="#ffffb0" font-size="11" text-anchor="middle">Größe</text>
</svg>
</body>
</html>
